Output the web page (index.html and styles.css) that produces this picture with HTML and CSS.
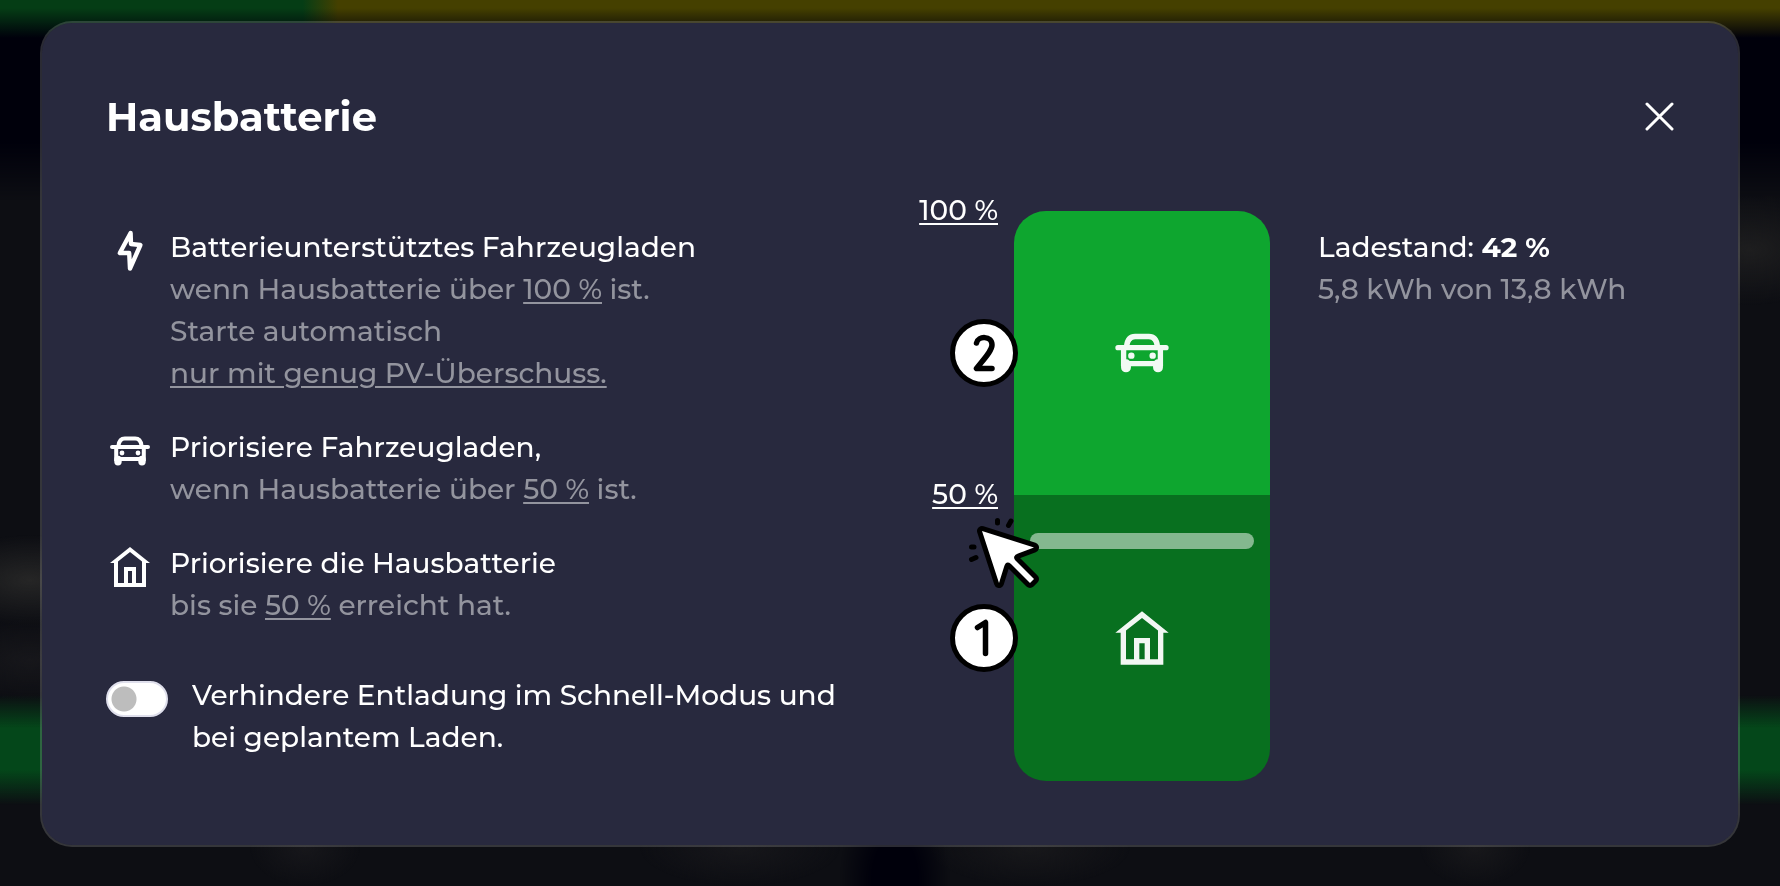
FILE: index.html
```html
<!DOCTYPE html>
<html lang="de">
<head>
<meta charset="utf-8">
<title>Hausbatterie</title>
<link rel="stylesheet" href="styles.css">
</head>
<body class="page">
<svg class="sprites" aria-hidden="true">
  <symbol id="car" viewBox="0 0 24 24">
    <path d="M6.200 9.500C6.500 7 7.500 5.800 9.400 5.800h5.200c1.900 0 2.900 1.200 3.200 3.700M3 10h18M5.100 10.500V16h13.800v-5.500" fill="none" stroke="currentColor" stroke-width="2" stroke-linecap="round"/>
    <path d="M6 16.200v1.200M18 16.200v1.200" fill="none" stroke="currentColor" stroke-width="3.700" stroke-linecap="round"/>
    <circle cx="8" cy="13" r="1.200" fill="currentColor"/><circle cx="16" cy="13" r="1.200" fill="currentColor"/>
  </symbol>
  <symbol id="house" viewBox="0 0 24 24">
    <path d="M2 10 12 2l10 8h-2v12H4V10zM6 20h3v-8h6v8h3V9.200L12 4.500 6 9.200zM11 14v6h2v-6z" fill="currentColor" fill-rule="evenodd"/>
  </symbol>
  <symbol id="bolt" viewBox="0 0 24 24">
    <path d="M12.300 3 6.900 13h4.700L12 20.800 17.200 9l-4.700-.5z" fill="none" stroke="currentColor" stroke-width="2.200" stroke-linejoin="round"/>
  </symbol>
</svg>
<div class="backdrop" aria-hidden="true"></div>
<main class="modal" role="dialog" aria-labelledby="title">
  <header class="modal-header">
    <h1 class="title" id="title">Hausbatterie</h1>
    <button class="close" type="button" aria-label="Schließen">
      <svg class="close-icon" viewBox="0 0 32 32"><path d="M5 3l25 25M30 3 5 28" fill="none" stroke="currentColor" stroke-width="3" stroke-linecap="round"/></svg>
    </button>
  </header>
  <div class="content">
    <section class="settings">
      <div class="item">
        <svg class="icon"><use href="#bolt"/></svg>
        <p class="text">Batterieunterstütztes Fahrzeugladen<br><span class="muted">wenn Hausbatterie über <a class="link" href="#">100 %</a> ist.<br>Starte automatisch<br><a class="link" href="#">nur mit genug PV-Überschuss.</a></span></p>
      </div>
      <div class="item">
        <svg class="icon"><use href="#car"/></svg>
        <p class="text">Priorisiere Fahrzeugladen,<br><span class="muted">wenn Hausbatterie über <a class="link" href="#">50 %</a> ist.</span></p>
      </div>
      <div class="item">
        <svg class="icon"><use href="#house"/></svg>
        <p class="text">Priorisiere die Hausbatterie<br><span class="muted">bis sie <a class="link" href="#">50 %</a> erreicht hat.</span></p>
      </div>
      <div class="switch-row">
        <input class="switch" type="checkbox" id="lock">
        <label class="text" for="lock">Verhindere Entladung im Schnell-Modus und<br>bei geplantem Laden.</label>
      </div>
    </section>
    <section class="battery">
      <div class="zone zone-car">
        <a class="link limit" href="#">100 %</a>
        <svg class="zone-icon"><use href="#car"/></svg>
        <svg class="marker" viewBox="0 0 68 68" role="img" aria-label="2"><circle cx="34" cy="34" r="31.500" fill="#fff" stroke="#000" stroke-width="5"/><path d="M26.500 24C28 16.500 42 16.500 42 26 42 32 33 41 26.500 49.500h15.500" fill="none" stroke="#000" stroke-width="5.500" stroke-linecap="round" stroke-linejoin="round"/></svg>
      </div>
      <div class="zone zone-home">
        <a class="link limit" href="#">50 %</a>
        <svg class="zone-icon"><use href="#house"/></svg>
        <svg class="marker" viewBox="0 0 68 68" role="img" aria-label="1"><circle cx="34" cy="34" r="31.500" fill="#fff" stroke="#000" stroke-width="5"/><path d="M27.500 23.500l8-5v31" fill="none" stroke="#000" stroke-width="5.500" stroke-linecap="round" stroke-linejoin="round"/></svg>
      </div>
      <div class="charge"></div>
      <svg class="cursor" viewBox="0 0 80 80" aria-hidden="true">
        <path class="pointer" d="M18 15 70 31.500 54 37.500Q48 40 51 44L70 63l-4 4-19-19Q42 44 40 51L35 67z"/>
        <path d="M33.500 4.500v2.500M47 5l-2.500 4.500M7.500 31h2.500M7.500 43.500l4.500-2" fill="none" stroke="#000" stroke-width="5" stroke-linecap="round"/>
      </svg>
    </section>
    <section class="status">
      <p class="text">Ladestand: <b>42 %</b><br><span class="muted">5,8 kWh von 13,8 kWh</span></p>
    </section>
  </div>
</main>
</body>
</html>
```

FILE: styles.css
```css
*, *::before, *::after { box-sizing: border-box; }
.page {
  margin: 0;
  min-height: 100vh;
  padding: 21px 40px 40px;
  background: #0d0e13;
  color: #fff;
  font-family: Montserrat, Inter, "Liberation Sans", sans-serif;
  font-size: 28px;
  font-weight: 500;
  line-height: 42px;
  overflow: hidden;
}
.sprites { position: absolute; width: 0; height: 0; }
.backdrop {
  position: fixed;
  inset: 0;
  background:
    linear-gradient(transparent 8px, #00000b 38px) top / 100% 40px no-repeat,
    linear-gradient(90deg, #053d15 17%, #454000 19%) top / 100% 40px no-repeat,
    linear-gradient(#00000b 100px, transparent) 0 40px / 100% 160px no-repeat,
    linear-gradient(transparent, #04471a 30%, #04471a 68%, transparent) 0 695px / 100% 110px no-repeat,
    radial-gradient(closest-side, #262626, transparent) -70px 535px / 200px 90px no-repeat,
    radial-gradient(closest-side, #17171b, transparent) -70px 620px / 200px 80px no-repeat,
    radial-gradient(closest-side, #1e1e1f, transparent) right -70px top 195px / 200px 110px no-repeat,
    radial-gradient(closest-side, #17171b, transparent) 250px 810px / 110px 76px no-repeat,
    radial-gradient(closest-side, #17171b, transparent) 640px 810px / 200px 76px no-repeat,
    radial-gradient(closest-side, #00000b 40%, transparent) 840px 780px / 110px 200px no-repeat,
    radial-gradient(closest-side, #18181b, transparent) 930px 810px / 200px 76px no-repeat,
    radial-gradient(closest-side, #18181b, transparent) 1420px 810px / 110px 76px no-repeat;
}
.modal {
  position: relative;
  padding: 64px;
  border: 2px solid #ffffff2b;
  border-radius: 32px;
  background: #28293e;
  background-clip: padding-box;
}
.modal-header { display: flex; justify-content: space-between; align-items: center; height: 60px; }
.title { margin: 0; font-size: 40px; font-weight: 700; line-height: 60px; }
.close { width: 32px; height: 32px; padding: 0; border: 0; background: none; color: inherit; cursor: pointer; }
.close-icon { display: block; width: 32px; height: 32px; }
.content {
  display: grid;
  grid-template-columns: minmax(0, 1fr) 256px minmax(0, 356px);
  column-gap: 48px;
  padding-top: 64px;
}
.settings { display: flex; flex-direction: column; gap: 32px; padding-top: 15px; }
.item { display: flex; gap: 16px; }
.icon { flex: none; width: 48px; height: 48px; margin-top: 1px; }
.text { margin: 0; }
.muted { color: #93949e; }
.link { color: inherit; text-decoration: underline; text-decoration-thickness: 2px; text-underline-offset: 3px; }
.switch-row { display: flex; gap: 24px; padding-top: 16px; }
.switch {
  appearance: none;
  flex: none;
  width: 62px;
  height: 36px;
  margin: 7px 0 0;
  border: 2px solid #dfdfec;
  border-radius: 18px;
  background: radial-gradient(circle at 16px 16px, #bdbdbd 12px, #fff 13px);
}
.switch:checked { background: radial-gradient(circle at 42px 16px, #0ba631 12px, #fff 13px); }
.battery { position: relative; display: grid; grid-template-rows: 284px 286px; }
.zone { position: relative; display: grid; place-items: center; color: #fff; }
.zone-car { background: #0ea62f; border-radius: 32px 32px 0 0; }
.zone-home { background: #08701f; border-radius: 0 0 32px 32px; }
.zone-icon { width: 64px; height: 64px; opacity: .95; }
.limit { position: absolute; top: -22px; right: calc(100% + 16px); white-space: nowrap; }
.marker { position: absolute; left: -64px; top: calc(50% - 34px); width: 68px; height: 68px; }
.charge {
  position: absolute;
  left: 16px;
  right: 16px;
  bottom: 232px;
  height: 16px;
  border-radius: 8px;
  background: #ffffff80;
}
.cursor { position: absolute; left: -50px; top: 305px; width: 80px; height: 80px; }
.pointer { fill: #fff; stroke: #000; stroke-width: 10px; stroke-linejoin: round; paint-order: stroke; }
.status { padding-top: 15px; }
```
